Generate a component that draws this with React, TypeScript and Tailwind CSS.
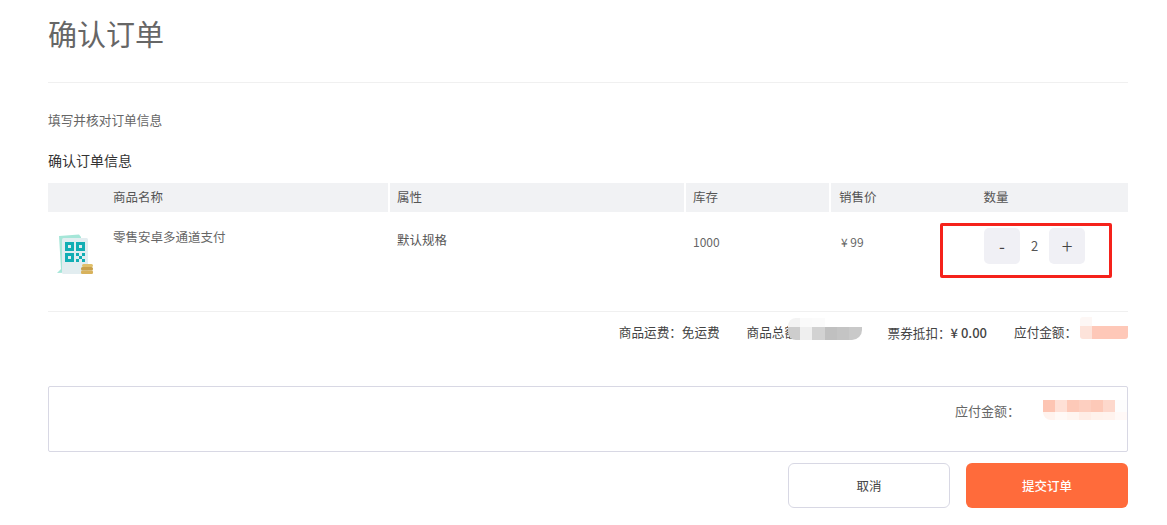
import React from "react";

const font = { fontFamily: '"Noto Sans CJK SC", "Noto Sans", sans-serif' };

type MosaicProps = {
  top: string[];
  bottom: string[];
  topClass: string;
  bottomClass: string;
  className: string;
};

// pixelated blur patch over the amounts
function Mosaic({ top, bottom, topClass, bottomClass, className }: MosaicProps) {
  return (
    <span className={`flex flex-col overflow-hidden ${className}`}>
      <span className={`flex ${topClass}`}>
        {top.map((c, i) => (
          <span key={i} className="h-full flex-1" style={{ backgroundColor: c }} />
        ))}
      </span>
      <span className={`flex ${bottomClass}`}>
        {bottom.map((c, i) => (
          <span key={i} className="h-full flex-1" style={{ backgroundColor: c }} />
        ))}
      </span>
    </span>
  );
}

function ProductIcon() {
  return (
    <svg width="40" height="42" viewBox="0 0 40 42">
      <path d="M4 2 L24 0.5 L26 3 L26 38 L2 39 L6 35 Z" fill="#a5e6d8" />
      <rect x="7" y="4" width="26" height="36" rx="1.5" fill="#e2edf0" />
      <g fill="#12aeb4">
        <path fillRule="evenodd" d="M10 8h9v9h-9z M13 11v3h3v-3z" />
        <path fillRule="evenodd" d="M21 8h9v9h-9z M24 11v3h3v-3z" />
        <path fillRule="evenodd" d="M10 19h9v9h-9z M13 22v3h3v-3z" />
        <path d="M21 19h3v3h-3z M27 19h3v3h-3z M24 22h3v3h-3z M21 25h3v3h-3z M27 25h3v3h-3z" />
      </g>
      <rect x="27" y="30" width="11" height="3" rx="1.5" fill="#e0bf6a" />
      <rect x="26" y="33" width="12" height="3.5" rx="1.5" fill="#c9a04a" />
      <rect x="26" y="36.5" width="12" height="3.5" rx="1.2" fill="#d8b25c" />
    </svg>
  );
}

export default function App() {
  return (
    <div className="h-[525px] w-[1167px] overflow-hidden bg-white pl-12 text-[#333]" style={font}>
      <div className="w-[1080px]">
        <div className="flex h-[83px] items-start border-b border-[#f0f0f0]">
          <h1 className="mt-[11px] text-[29px] leading-[44px] font-normal text-[#666]">确认订单</h1>
        </div>

        <p className="mt-[28px] text-[12.7px] leading-[18px] text-[#666]">填写并核对订单信息</p>
        <h2 className="mt-[22px] text-[14px] leading-[18px] font-normal text-[#333]">确认订单信息</h2>

        {/* table header */}
        <div className="mt-[14px] flex h-[29px] gap-[2px] text-[12.5px] leading-[28px] text-[#555]">
          <div className="w-[340px] bg-[#f1f2f4] pl-[65px]">商品名称</div>
          <div className="w-[294px] bg-[#f1f2f4] pl-[7px]">属性</div>
          <div className="w-[143px] bg-[#f1f2f4] pl-[7px]">库存</div>
          <div className="flex-1 bg-[#f1f2f4] pl-[8px]">
            销售价<span className="ml-[107px]">数量</span>
          </div>
        </div>

        {/* product row */}
        <div className="flex h-[100px] border-b border-[#f0f0f0] text-[12px] text-[#555]">
          <div className="flex w-[342px]">
            <div className="mt-[22px] ml-[7px] w-[40px]">
              <ProductIcon />
            </div>
            <div className="mt-[16px] ml-[18px] text-[12.5px] leading-[18px] text-[#666]">零售安卓多通道支付</div>
          </div>
          <div className="mt-[19px] w-[296px] pl-[7px] text-[12.5px] leading-[18px]">默认规格</div>
          <div className="mt-[21px] w-[146px] pl-[7px] leading-[18px] text-[#666]">1000</div>
          <div className="mt-[21px] w-[108px] pl-[9px] leading-[18px] text-[#666]">¥ 99</div>
          <div className="mt-[11px] h-[55px] w-[172px] rounded-[2px] border-[3px] border-[#f5221b] pt-[2px] pl-[41px]">
            <div className="flex h-[36px] items-center">
              <button className="flex h-[36px] w-[36px] items-center justify-center rounded-[5px] bg-[#f0f0f5] text-[17px] text-[#444]">-</button>
              <span className="w-[29px] text-center text-[13px] text-[#555]">2</span>
              <button className="flex h-[36px] w-[36px] items-center justify-center rounded-[5px] bg-[#f0f0f5] text-[20px] font-light text-[#444]">+</button>
            </div>
          </div>
        </div>

        {/* totals */}
        <div className="flex h-[41px] items-center justify-end text-[12.6px] text-[#444]">
          <span>商品运费：免运费</span>
          <span className="relative ml-[27px] w-[115px]">
            商品总额
            <Mosaic
              top={["#f3f3f3", "#fafafa", "#fbfbfb", "#ffffff", "#ffffff", "#ffffff"]}
              bottom={["#cdcdcd", "#efefef", "#d2d2d2", "#c0c0c0", "#c4c4c4", "#c9c9c9"]}
              topClass="h-[9px]"
              bottomClass="h-[13px]"
              className="absolute top-[-5px] left-[41px] w-[74px] rounded-l-[8px] rounded-br-[10px]"
            />
          </span>
          <span className="ml-[26px]">
            票券抵扣：<span className="text-[13px] font-medium">¥ 0.00</span>
          </span>
          <span className="ml-[27px]">应付金额：</span>
          <span className="relative ml-[3px] h-[13px] w-[48px]">
            <Mosaic
              top={["#fdf7f5", "#ffffff", "#ffffff", "#ffffff"]}
              bottom={["#fde3da", "#fec8b8", "#fec8b8", "#fec8b8"]}
              topClass="h-[9px]"
              bottomClass="h-[13px]"
              className="absolute top-[-9px] left-0 w-[48px] rounded-[3px]"
            />
          </span>
        </div>

        {/* payable box */}
        <div className="mt-[33px] flex h-[66px] justify-end rounded-[2px] border border-[#d8d8e4] text-[13px] text-[#666]">
          <span className="relative mt-[14px] w-[172px] leading-[20px]">
            应付金额：
            <Mosaic
              top={["#fdc5b3", "#fee0d6", "#fdc9b8", "#fdcfc0", "#fdc9b8", "#fdd8cc", "#fdfdfd"]}
              bottom={["#fff3ee", "#fff9f6", "#fff5f0", "#ffede6", "#fff2ec", "#fff3ee", "#fff9f7"]}
              topClass="h-[12px]"
              bottomClass="h-[8px]"
              className="absolute top-[-1px] left-[88px] w-[84px] rounded-bl-[8px]"
            />
          </span>
        </div>

        {/* actions */}
        <div className="mt-[11px] flex justify-end gap-[16px] text-[12.5px]">
          <button className="h-[45px] w-[162px] rounded-[6px] border border-[#d8d8e4] bg-white pt-[2px] text-[#444]">取消</button>
          <button className="h-[45px] w-[162px] rounded-[6px] bg-[#ff6b3b] pt-[2px] font-medium text-white">提交订单</button>
        </div>
      </div>
    </div>
  );
}
